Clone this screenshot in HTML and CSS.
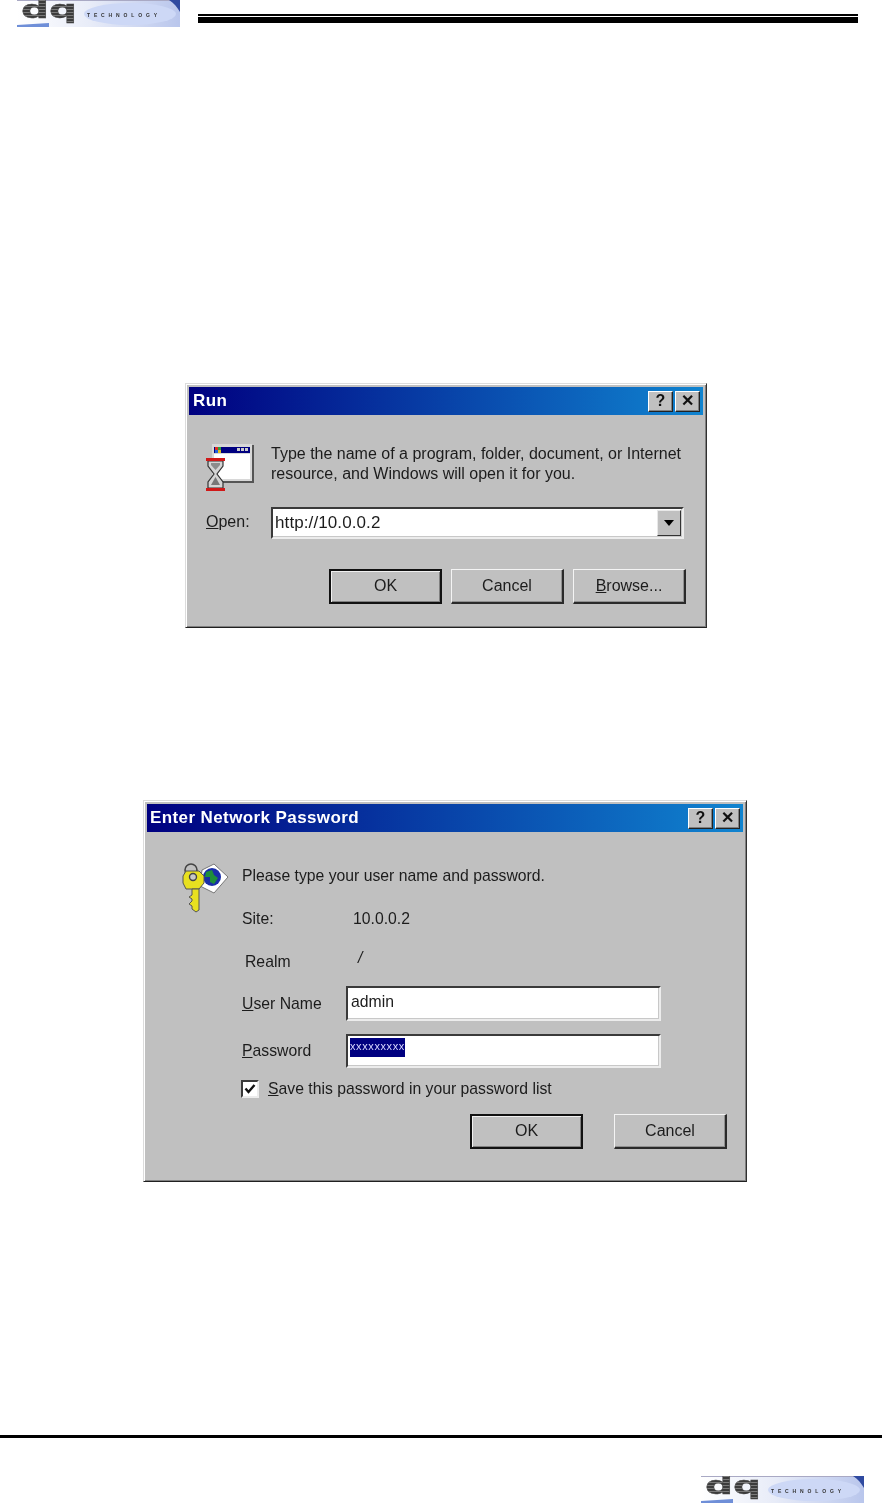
FILE: index.html
```html
<!DOCTYPE html>
<html lang="en">
<head>
  <meta charset="UTF-8">
  <title>Connecting to the device</title>
  <link rel="stylesheet" href="styles.css">
</head>
<body>

  <!-- shared logo -->
  <svg class="defs" width="0" height="0">
    <defs>
      <linearGradient id="logoBg" x1="0" y1="0" x2="1" y2="0">
        <stop offset="0" stop-color="#ffffff"/>
        <stop offset="0.45" stop-color="#e8ecf8"/>
        <stop offset="1" stop-color="#b9c6ec"/>
      </linearGradient>
      <pattern id="dqStripes" width="4" height="3" patternUnits="userSpaceOnUse">
        <rect width="4" height="3" fill="#3c3c3c"/>
        <rect width="4" height="1" fill="#7a7a7a"/>
      </pattern>
      <symbol id="dq-logo" viewBox="0 0 163 27">
        <rect width="163" height="27" fill="url(#logoBg)"/>
        <rect width="163" height="1" fill="#a9a9c4"/>
        <ellipse cx="113" cy="14" rx="46" ry="11" fill="#cdd8f6"/>
        <path d="M152 0H163V12C160 7 157 3 152 0Z" fill="#2f4aa0"/>
        <path d="M0 27L0 25L32 23L32 27Z" fill="#6f8fd8"/>
        <text class="logo-dq" x="4" y="18" textLength="56" lengthAdjust="spacingAndGlyphs">dq</text>
        <text class="logo-tech" x="70" y="16.5" textLength="70">TECHNOLOGY</text>
      </symbol>
    </defs>
  </svg>

  <header class="page-head">
    <svg class="logo"><use href="#dq-logo"/></svg>
    <div class="head-rule"></div>
  </header>

  <!-- RUN DIALOG -->
  <section class="dialog dialog-run">
    <div class="title-bar">
      <span>Run</span>
      <div class="title-btns">
        <button class="cap-btn">?</button>
        <button class="cap-btn cap-x">✕</button>
      </div>
    </div>
    <div class="run-body">
      <svg class="icon-run" width="49" height="48" viewBox="0 0 49 48">
        <rect x="8" y="1" width="41" height="38" fill="#555"/>
        <rect x="7" y="0" width="40" height="37" fill="#d8d8d8"/>
        <rect x="9" y="3" width="36" height="6" fill="#000080"/>
        <rect x="10" y="3" width="3" height="3" fill="#e03020"/>
        <rect x="13" y="3" width="3" height="3" fill="#30a040"/>
        <rect x="10" y="6" width="3" height="3" fill="#2060e0"/>
        <rect x="13" y="6" width="3" height="3" fill="#e0c020"/>
        <rect x="32" y="4" width="3" height="3" fill="#ccc"/>
        <rect x="36" y="4" width="3" height="3" fill="#ccc"/>
        <rect x="40" y="4" width="3" height="3" fill="#ccc"/>
        <rect x="9" y="10" width="36" height="25" fill="#fff"/>
        <path d="M3 17H18V22L12 30L18 38V44H3V38L9 30L3 22Z" fill="#d4d4d4" stroke="#333" stroke-width="1.2"/>
        <path d="M6 19H15V21L10.5 26L6 21Z" fill="#8c8c8c"/>
        <path d="M6 41L10.5 33L15 41Z" fill="#777"/>
        <rect x="1" y="14" width="19" height="3" fill="#d01818"/>
        <rect x="1" y="44" width="19" height="3" fill="#d01818"/>
      </svg>
      <p class="run-text">Type the name of a program, folder, document, or Internet<br>resource, and Windows will open it for you.</p>
      <label class="run-label"><u>O</u>pen:</label>
      <div class="field combo">
        <span class="combo-text">http://10.0.0.2</span>
        <span class="combo-btn"><i class="arrow"></i></span>
      </div>
    </div>
    <div class="btn-row run-btns">
      <button class="win-btn is-default">OK</button>
      <button class="win-btn">Cancel</button>
      <button class="win-btn"><u>B</u>rowse...</button>
    </div>
  </section>

  <!-- PASSWORD DIALOG -->
  <section class="dialog dialog-pass">
    <div class="title-bar">
      <span>Enter Network Password</span>
      <div class="title-btns">
        <button class="cap-btn">?</button>
        <button class="cap-btn cap-x">✕</button>
      </div>
    </div>
    <div class="pass-body">
      <svg class="icon-key" width="48" height="52" viewBox="0 0 48 52">
        <path d="M21 8L33 2L47 15L33 31L19 24Z" fill="#fff" stroke="#777" stroke-width="1"/>
        <circle cx="31" cy="15" r="9" fill="#1a2fa8"/>
        <path d="M25 10L31 8L33 13L37 16L33 22L29 20L29 15L24 15Z" fill="#1f8f3a"/>
        <circle cx="10" cy="8" r="6" fill="none" stroke="#444" stroke-width="1.6"/>
        <path d="M5 9H18L23 14V21L18 27H5L2 21V14Z" fill="#e8e020" stroke="#555" stroke-width="1"/>
        <circle cx="12" cy="15" r="3.5" fill="#c8c8c8" stroke="#444" stroke-width="1.4"/>
        <path d="M11 27H18V48L15 50L11 47V44L8 42L11 39V37L8 35L11 33Z" fill="#e8e020" stroke="#555" stroke-width="1"/>
      </svg>
      <div class="pass-form">
        <p class="pass-row">Please type your user name and password.</p>
        <div class="pass-row row-site"><span class="key-col">Site:</span><span>10.0.0.2</span></div>
        <div class="pass-row row-realm"><span class="key-col realm-col">Realm</span><span class="realm-val">/</span></div>
        <div class="pass-row row-user">
          <label class="key-col"><u>U</u>ser Name</label>
          <div class="field input-field">admin</div>
        </div>
        <div class="pass-row row-pw">
          <label class="key-col"><u>P</u>assword</label>
          <div class="field input-field pw-field"><span class="pw-sel">xxxxxxxxx</span></div>
        </div>
        <div class="pass-row row-check">
          <span class="check-box"><svg width="12" height="12" viewBox="0 0 12 12"><path d="M1.5 5.5L4.5 9L10.5 2" fill="none" stroke="#111" stroke-width="2.4"/></svg></span>
          <span><u>S</u>ave this password in your password list</span>
        </div>
      </div>
    </div>
    <div class="btn-row pass-btns">
      <button class="win-btn is-default">OK</button>
      <button class="win-btn">Cancel</button>
    </div>
  </section>

  <footer class="page-foot">
    <div class="foot-rule"></div>
    <svg class="logo foot-logo"><use href="#dq-logo"/></svg>
  </footer>

</body>
</html>
```

FILE: styles.css
```css
html, body {
  margin: 0;
  padding: 0;
}

body {
  display: flex;
  flex-direction: column;
  height: 1503px;
  overflow: hidden;
  background: #fff;
  font-family: "Liberation Sans", Arial, sans-serif;
  color: #1c1c1c;
}

.defs {
  position: absolute;
}

.logo {
  display: block;
  width: 163px;
  height: 27px;
  filter: blur(0.5px);
}

.logo-dq {
  font-family: "DejaVu Sans", sans-serif;
  font-weight: 700;
  font-size: 25px;
  fill: url(#dqStripes);
  stroke: #444;
  stroke-width: 0.4px;
}

.logo-tech {
  font-family: "Liberation Sans", sans-serif;
  font-weight: 700;
  font-size: 5px;
  fill: #333;
}

/* page header and footer */
.page-head {
  display: flex;
  height: 27px;
  padding-left: 17px;
}

.head-rule {
  width: 660px;
  height: 1px;
  margin: 14px 0 0 18px;
  border-top: 2px solid #000;
  border-bottom: 6px solid #000;
}

.page-foot {
  display: flex;
  flex-direction: column;
  margin-top: auto;
}

.foot-rule {
  height: 3px;
  background: #000;
  margin-bottom: 38px;
}

.foot-logo {
  align-self: flex-end;
  margin-right: 18px;
}

/* dialogs */
.dialog {
  box-sizing: border-box;
  background: #c0c0c0;
  border: 1px solid;
  border-color: #dcdcdc #303030 #202020 #dcdcdc;
  box-shadow: inset 1px 1px 0 #fff, inset -1px -1px 0 #808080;
  padding: 3px;
  filter: blur(0.4px);
  font-size: 16px;
}

.dialog-run {
  width: 522px;
  height: 245px;
  margin: 356px 0 0 185px;
}

.dialog-pass {
  width: 604px;
  height: 382px;
  margin: 172px 0 0 143px;
  font-size: 15.75px;
}

.title-bar {
  display: flex;
  align-items: center;
  height: 28px;
  padding: 0 3px 0 4px;
  background: linear-gradient(90deg, #000080, #1084d0);
  color: #fff;
  font-weight: 700;
  font-size: 17px;
  letter-spacing: 0.4px;
}

.dialog-pass .title-bar {
  padding-left: 3px;
}

.title-btns {
  display: flex;
  gap: 2px;
  margin-left: auto;
}

.cap-btn {
  box-sizing: border-box;
  width: 25px;
  height: 21px;
  padding: 0;
  background: #c0c0c0;
  border: 1px solid;
  border-color: #fff #222 #222 #fff;
  box-shadow: inset -1px -1px 0 #808080;
  font-family: "Liberation Sans", sans-serif;
  font-weight: 700;
  font-size: 16px;
  line-height: 18px;
  color: #111;
}

/* sunken input look */
.field {
  box-sizing: border-box;
  background: #fff;
  border: 2px solid;
  border-color: #3a3a3a #ececec #ececec #3a3a3a;
  box-shadow: inset -1px -1px 0 #c8c8c8;
}

/* run dialog */
.run-body {
  display: grid;
  grid-template-columns: 66px 413px;
  align-items: center;
  row-gap: 15px;
  padding: 28px 0 0 16px;
}

.icon-run {
  display: block;
  margin-top: 1px;
}

.run-text {
  margin: 0;
  padding-top: 1px;
  line-height: 20px;
  white-space: nowrap;
  align-self: start;
}

.run-label {
  padding: 0 0 2px 1px;
}

.combo {
  display: flex;
  align-items: center;
  height: 32px;
  padding: 0 1px 0 2px;
}

.combo-text {
  font-size: 17px;
  letter-spacing: 0.1px;
}

.combo-btn {
  display: flex;
  align-items: center;
  justify-content: center;
  width: 24px;
  height: 26px;
  margin-left: auto;
  background: #c0c0c0;
  border: 1px solid;
  border-color: #e8e8e8 #333 #333 #e8e8e8;
  box-sizing: border-box;
}

.arrow {
  display: block;
  border: 5px solid transparent;
  border-top: 6px solid #000;
  border-bottom: 0;
}

/* buttons */
.btn-row {
  display: flex;
}

.run-btns {
  justify-content: flex-end;
  gap: 9px;
  margin-top: 30px;
  padding-right: 17px;
}

.pass-btns {
  justify-content: flex-end;
  gap: 31px;
  margin-top: 15px;
  padding-right: 16px;
}

.win-btn {
  box-sizing: border-box;
  width: 113px;
  height: 35px;
  padding: 0;
  background: #c0c0c0;
  border-style: solid;
  border-width: 1px 2px 2px 1px;
  border-color: #f4f4f4 #2a2a2a #2a2a2a #f4f4f4;
  box-shadow: inset -1px -1px 0 #909090;
  font-family: "Liberation Sans", Arial, sans-serif;
  font-size: 16px;
  color: #1c1c1c;
}

.win-btn.is-default {
  border: 2px solid #111;
  padding-bottom: 2px;
  box-shadow: inset 1px 1px 0 #f0f0f0, inset -1px -1px 0 #808080;
}

/* password dialog */
.pass-body {
  display: flex;
  padding: 30px 0 0 33px;
}

.icon-key {
  flex: none;
  margin: 0 0 0 1px;
}

.pass-form {
  margin-left: 13px;
  margin-top: 4px;
}

.pass-row {
  display: flex;
  align-items: center;
  margin: 0;
  line-height: 20px;
}

.key-col {
  width: 104px;
  flex: none;
}

.row-site {
  margin-top: 23px;
}

.row-site .key-col {
  width: 111px;
}

.row-realm {
  margin-top: 23px;
}

.realm-col {
  padding-left: 3px;
  width: 113px;
}

.realm-val {
  margin-top: -8px;
  font-style: italic;
}

.row-user {
  margin-top: 14px;
}

.row-pw {
  margin-top: 13px;
}

.input-field {
  width: 315px;
  height: 35px;
  padding: 3px 3px 0;
  line-height: 22px;
}

.pw-field {
  height: 34px;
  padding: 2px;
}

.pw-sel {
  display: block;
  width: 55px;
  height: 19px;
  background: #000080;
  color: #d8d8ff;
  font-size: 11px;
  line-height: 17px;
  letter-spacing: 0.6px;
  overflow: hidden;
}

.row-check {
  gap: 9px;
  margin-top: 11px;
  margin-left: -1px;
}

.check-box {
  box-sizing: border-box;
  display: flex;
  align-items: center;
  justify-content: center;
  width: 18px;
  height: 18px;
  background: #fff;
  border: 2px solid;
  border-color: #3a3a3a #ececec #ececec #3a3a3a;
}
```
